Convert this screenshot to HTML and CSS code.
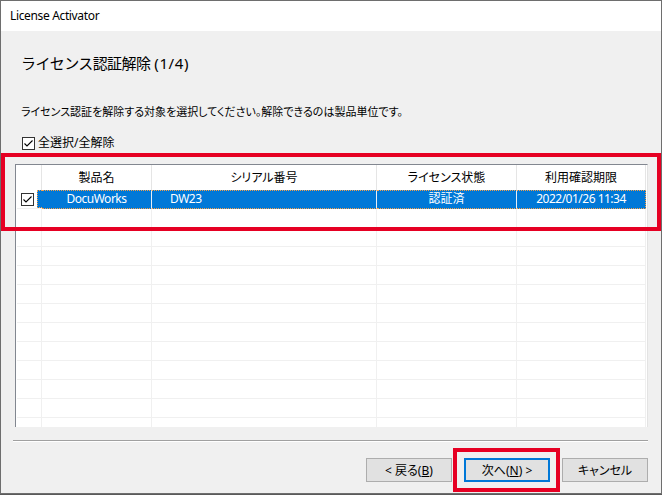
FILE: index.html
```html
<!DOCTYPE html>
<html lang="ja">
<head>
<meta charset="utf-8">
<title>License Activator</title>
<link rel="stylesheet" href="styles.css">
</head>
<body>
<div class="window">
  <div class="titlebar">License Activator</div>
  <div class="content">
    <h1 class="heading">ライセンス認証解除<span class="step">(1/4)</span></h1>
    <p class="desc">ライセンス認証を解除する対象を選択してください。解除できるのは製品単位です。</p>
    <div class="check-all">
      <span class="cb"><svg viewBox="0 0 13 13" width="13" height="13"><path d="M2.5 6.5 L5 9 L10.5 3.5" fill="none" stroke="#000" stroke-width="1.1"/></svg></span>
      <span class="check-label">全選択/全解除</span>
    </div>
    <div class="listview">
      <div class="lv-row lv-header">
        <div class="hc"></div>
        <div class="hc">製品名</div>
        <div class="hc">シリアル番号</div>
        <div class="hc">ライセンス状態</div>
        <div class="hc">利用確認期限</div>
      </div>
      <div class="lv-body">
        <div class="lv-row row selected">
          <div class="c c-check"><span class="cb"><svg viewBox="0 0 13 13" width="13" height="13"><path d="M2.5 6.5 L5 9 L10.5 3.5" fill="none" stroke="#000" stroke-width="1.1"/></svg></span><span class="sel-lead"></span></div>
          <div class="c sel center latin">DocuWorks</div>
          <div class="c sel serial latin">DW23</div>
          <div class="c sel center">認証済</div>
          <div class="c sel center last latin">2022/01/26 11:34</div>
        </div>
        <div class="lv-row row"><div class="c"></div><div class="c"></div><div class="c"></div><div class="c"></div><div class="c"></div></div>
        <div class="lv-row row"><div class="c"></div><div class="c"></div><div class="c"></div><div class="c"></div><div class="c"></div></div>
        <div class="lv-row row"><div class="c"></div><div class="c"></div><div class="c"></div><div class="c"></div><div class="c"></div></div>
        <div class="lv-row row"><div class="c"></div><div class="c"></div><div class="c"></div><div class="c"></div><div class="c"></div></div>
        <div class="lv-row row"><div class="c"></div><div class="c"></div><div class="c"></div><div class="c"></div><div class="c"></div></div>
        <div class="lv-row row"><div class="c"></div><div class="c"></div><div class="c"></div><div class="c"></div><div class="c"></div></div>
        <div class="lv-row row"><div class="c"></div><div class="c"></div><div class="c"></div><div class="c"></div><div class="c"></div></div>
        <div class="lv-row row"><div class="c"></div><div class="c"></div><div class="c"></div><div class="c"></div><div class="c"></div></div>
        <div class="lv-row row"><div class="c"></div><div class="c"></div><div class="c"></div><div class="c"></div><div class="c"></div></div>
        <div class="lv-row row"><div class="c"></div><div class="c"></div><div class="c"></div><div class="c"></div><div class="c"></div></div>
        <div class="lv-row row"><div class="c"></div><div class="c"></div><div class="c"></div><div class="c"></div><div class="c"></div></div>
        <div class="lv-row row"><div class="c"></div><div class="c"></div><div class="c"></div><div class="c"></div><div class="c"></div></div>
      </div>
    </div>
    <div class="separator"></div>
    <div class="buttons">
      <button class="btn">&lt; 戻る(<u>B</u>)</button>
      <button class="btn default">次へ(<u>N</u>) &gt;</button>
      <button class="btn">キャンセル</button>
    </div>
  </div>
  <div class="annot annot-list"></div>
  <div class="annot annot-next"></div>
</div>
</body>
</html>
```
FILE: styles.css
```css
* { box-sizing: border-box; }
html, body { margin: 0; padding: 0; }
body {
  background: #5a5a5a;
  width: 662px;
  height: 495px;
  overflow: hidden;
  font-family: "Noto Sans", "Noto Sans CJK JP", sans-serif;
  font-size: 12px;
  color: #000;
}
.window {
  position: relative;
  width: 662px;
  height: 494px;
  border: 1px solid #6e6e6e;
  background: #f0f0f0;
  display: flex;
  flex-direction: column;
}
.titlebar {
  height: 30px;
  background: #fff;
  padding-left: 9px;
  line-height: 30px;
  font-size: 12px;
  letter-spacing: -0.35px;
  flex: none;
}
.content {
  flex: 1;
  padding: 0 13px 0 14px;
  display: flex;
  flex-direction: column;
  font-feature-settings: "palt";
}
.heading {
  margin: 22px 0 0 6px;
  font-size: 15px;
  font-weight: normal;
  line-height: 20px;
  font-feature-settings: normal;
  letter-spacing: -0.6px;
}
.step { margin-left: 4px; letter-spacing: 0.6px; }
.desc {
  margin: 31px 0 0 6px;
  line-height: 16px;
  font-size: 11px;
}
.check-all {
  margin: 15px 0 0 7px;
  display: flex;
  align-items: center;
  height: 16px;
}
.cb {
  width: 13px;
  height: 13px;
  border: 1px solid #333;
  background: #fff;
  display: inline-block;
  position: relative;
  flex: none;
}
.cb svg { position: absolute; left: -1px; top: -1px; }
.check-label { margin-left: 3px; line-height: 16px; }
.listview {
  margin-top: 13px;
  height: 263px;
  background: #fff;
  border-top: 1px solid #828790;
  border-left: 1px solid #828790;
  border-right: 1px solid #e3e3e3;
  overflow: hidden;
}
.lv-row {
  display: grid;
  grid-template-columns: 26px 110px 225px 140px 129px;
}
.lv-header { height: 25px; }
.hc {
  border-right: 1px solid #e5e5e5;
  text-align: center;
  line-height: 23px;
  padding-top: 1px;
}
.row { height: 19px; }
.c {
  border-right: 1px solid #f0f0f0;
  border-bottom: 1px solid #f0f0f0;
  line-height: 17px;
}
.c:first-child { margin-left: 1px; }
.c-check {
  display: flex;
  align-items: center;
  padding-left: 4px;
  border-right: none;
}
.c-check .sel-lead {
  flex: 1;
  align-self: stretch;
  margin-left: 3px;
  background: #0078d7;
  border-top: 1px dotted #f5a04a;
  border-bottom: 1px dotted #f5a04a;
  border-left: 1px dotted #f5a04a;
}
.sel {
  background: #0078d7;
  color: #fff;
  border-top: 1px dotted #f5a04a;
  border-bottom: 1px dotted #f5a04a;
  border-right: 1px solid #e8eef6;
  line-height: 16px;
}
.sel.last { border-right: 1px dotted #f5a04a; }
.latin { letter-spacing: -0.5px; }
.center { text-align: center; }
.serial { padding-left: 18px; }
.separator {
  margin: 13px 0 0 -2px;
  height: 2px;
  border-top: 1px solid #a0a0a0;
  border-bottom: 1px solid #fff;
}
.buttons {
  margin-top: 16px;
  display: flex;
  justify-content: flex-end;
  gap: 12px;
}
.btn {
  width: 86px;
  height: 24px;
  background: #e1e1e1;
  border: 1px solid #adadad;
  font-family: inherit;
  font-size: 12px;
  font-feature-settings: "palt";
  color: #000;
  padding: 0;
  margin: 0;
}
.btn.default { border: 2px solid #0078d7; }
.btn u { text-underline-offset: 1px; }
.annot {
  position: absolute;
  border: 4px solid #e60023;
  pointer-events: none;
}
.annot-list { left: 0px; top: 152px; width: 660px; height: 78px; }
.annot-next { left: 452px; top: 447px; width: 107px; height: 44px; }
```
